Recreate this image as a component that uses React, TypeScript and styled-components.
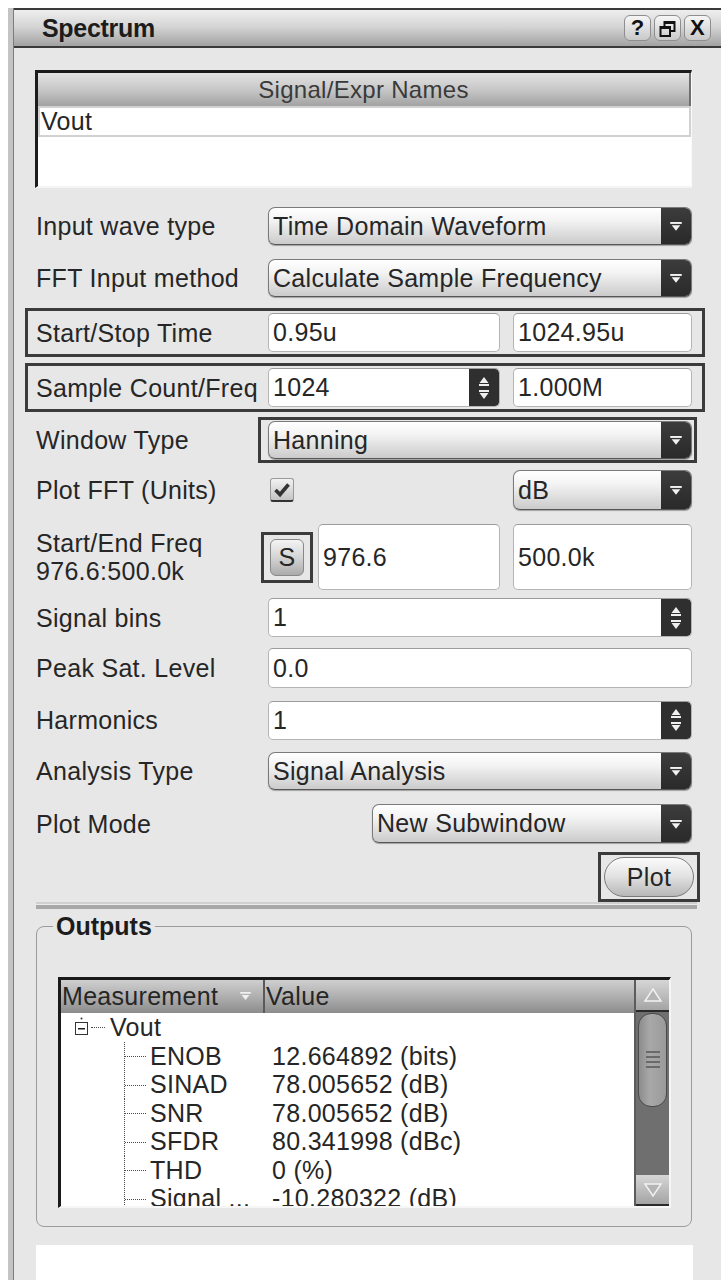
import React from 'react';
import styled, { createGlobalStyle, css } from 'styled-components';

const GlobalStyle = createGlobalStyle`
  html, body { margin: 0; padding: 0; background: #ffffff; }
  body {
    font-family: "Liberation Sans", Arial, sans-serif;
    color: #262626;
    letter-spacing: 0.3px;
  }
  * { box-sizing: border-box; }
`;

const Page = styled.div`
  height: 1280px;
  padding: 8px 0 0 8px;
  overflow: hidden;
`;

const Frame = styled.div`
  height: 1272px;
  border-left: 5px solid #c4c4c4;
`;

const Window = styled.div`
  height: 100%;
  display: flex;
  flex-direction: column;
  border-left: 1px solid #7c7c7c;
  background: #e7e7e7;
`;

const TitleBar = styled.div`
  height: 40px;
  flex: none;
  display: flex;
  align-items: center;
  justify-content: space-between;
  padding: 0 10px 0 28px;
  border-top: 2px solid #3a3a3a;
  border-bottom: 2px solid #3a3a3a;
  background: linear-gradient(#eeeeee, #d6d6d6 45%, #a2a2a2);
`;

const Title = styled.div`
  font-size: 25px;
  font-weight: bold;
  color: #1c1c1c;
  letter-spacing: -0.3px;
`;

const TitleButtons = styled.div`
  display: flex;
  gap: 3px;
`;

const WinButton = styled.div`
  width: 27px;
  height: 26px;
  display: flex;
  align-items: center;
  justify-content: center;
  border: 1px solid #8e8e8e;
  border-radius: 6px;
  background: linear-gradient(#f6f6f6, #c9c9c9);
  font-size: 22px;
  font-weight: bold;
  color: #111;
`;

const Body = styled.div`
  flex: 1;
  display: flex;
  flex-direction: column;
  padding-top: 22px;
  overflow: hidden;
`;

const ListBox = styled.div`
  margin: 0 29px 0 21px;
  height: 118px;
  flex: none;
  background: #ffffff;
  border-top: 3px solid #1c1c1c;
  border-left: 3px solid #1c1c1c;
  border-right: 1px solid #fafafa;
  border-bottom: 2px solid #f4f4f4;
`;

const ListHeader = styled.div`
  height: 33px;
  display: flex;
  align-items: center;
  justify-content: center;
  font-size: 24px;
  color: #3a3a3a;
  border-right: 2px solid #6e6e6e;
  background: linear-gradient(#e4e4e4, #c4c4c4 55%, #a2a2a2);
`;

const ListItem = styled.div`
  height: 31px;
  display: flex;
  align-items: center;
  padding-left: 1px;
  font-size: 25px;
  border: 2px solid #d2d2d2;
`;

const Row = styled.div<{ $top: number; $h: number; $boxed?: boolean }>`
  display: grid;
  grid-template-columns: 232px 1fr;
  align-items: center;
  flex: none;
  height: ${p => p.$h}px;
  ${p =>
    p.$boxed
      ? css`
          margin: ${p.$top}px 16px 0 11px;
          padding: 0 10px 0 8px;
          border: 3px solid #3b3b3b;
        `
      : css`
          margin: ${p.$top}px 29px 0 22px;
        `}
`;

const Label = styled.div`
  font-size: 25px;
  line-height: 28px;
  white-space: nowrap;
`;

const Pair = styled.div`
  display: grid;
  grid-template-columns: 232px 1fr;
  gap: 13px;
  align-items: center;
  height: 100%;
`;

const ComboBox = styled.div<{ $offset?: number; $h?: number }>`
  display: flex;
  height: ${p => p.$h ?? 39}px;
  margin-left: ${p => p.$offset ?? 0}px;
  border: 1px solid #7a7a7a;
  border-bottom-color: #565656;
  border-radius: 7px;
  overflow: hidden;
  background: linear-gradient(#ffffff, #f3f3f3 35%, #cbcbcb);
  box-shadow: 0 1px 1px rgba(0, 0, 0, 0.3);
`;

const ComboText = styled.div`
  flex: 1;
  display: flex;
  align-items: center;
  padding-left: 4px;
  font-size: 25px;
  white-space: nowrap;
`;

const ComboArrow = styled.div`
  width: 30px;
  flex: none;
  display: flex;
  align-items: center;
  justify-content: center;
  padding-top: 2px;
  background: linear-gradient(#3c3c3c, #2a2a2a);
`;

const Field = styled.div<{ $h?: number }>`
  display: flex;
  align-items: stretch;
  height: ${p => p.$h ?? 39}px;
  background: #ffffff;
  border: 1px solid #b4b4b4;
  border-top-color: #9c9c9c;
  border-radius: 5px;
  overflow: hidden;
`;

const FieldText = styled.div`
  flex: 1;
  display: flex;
  align-items: center;
  padding-left: 4px;
  font-size: 25px;
  white-space: nowrap;
`;

const SpinButtons = styled.div`
  width: 30px;
  flex: none;
  display: flex;
  align-items: center;
  justify-content: center;
  background: #2f2f2f;
  border-radius: 0 4px 4px 0;
`;

const HighlightBox = styled.div<{ $ml?: number; $mr?: number }>`
  display: flex;
  align-items: center;
  height: 100%;
  margin-left: ${p => p.$ml ?? 0}px;
  margin-right: ${p => p.$mr ?? 0}px;
  padding: 0 2px 0 7px;
  border: 3px solid #3b3b3b;
  > * { flex: 1; }
`;

const CheckBox = styled.div`
  width: 24px;
  height: 24px;
  margin-left: 2px;
  display: flex;
  align-items: center;
  justify-content: center;
  border: 1px solid #9a9a9a;
  border-bottom: 2px solid #333;
  border-radius: 3px;
  background: linear-gradient(#f2f2f2, #c4c4c4);
`;

const FreqCell = styled.div`
  display: flex;
  align-items: center;
  gap: 5px;
  margin-left: -7px;
  height: 100%;
  > :last-child { flex: 1; }
`;

const SmallBox = styled.div`
  padding: 4px 6px;
  border: 3px solid #3b3b3b;
`;

const SButton = styled.div`
  width: 34px;
  height: 37px;
  display: flex;
  align-items: center;
  justify-content: center;
  border: 1px solid #888;
  border-radius: 6px;
  background: linear-gradient(#f4f4f4, #d4d4d4 50%, #ababab);
  font-size: 25px;
`;

const PlotRow = styled.div`
  display: flex;
  justify-content: flex-end;
  flex: none;
  margin: 9px 21px 0 22px;
  height: 50px;
`;

const PlotBox = styled.div`
  padding: 2px 3px;
  border: 3px solid #3b3b3b;
`;

const PlotButton = styled.div`
  width: 90px;
  height: 40px;
  display: flex;
  align-items: center;
  justify-content: center;
  border: 1px solid #7a7a7a;
  border-radius: 20px;
  background: linear-gradient(#fbfbfb, #e4e4e4 45%, #b8b8b8);
  font-size: 25px;
`;

const Separator = styled.div`
  flex: none;
  height: 7px;
  margin: 0 24px 0 22px;
  background: linear-gradient(#d0d0d0 0 2px, #ececec 2px 3px, #a8a8a8 3px 7px);
`;

const Group = styled.fieldset`
  flex: none;
  margin: 3px 29px 0 22px;
  padding: 37px 20px 18px 21px;
  border: 1px solid #9c9c9c;
  border-radius: 8px;
  min-width: 0;
`;

const GroupTitle = styled.legend`
  margin-left: -5px;
  padding: 0 3px;
  font-size: 25px;
  line-height: 28px;
  font-weight: bold;
  color: #1c1c1c;
  letter-spacing: 0;
`;

const Table = styled.div`
  height: 231px;
  display: grid;
  grid-template-columns: 1fr 33px;
  background: #ffffff;
  border-top: 3px solid #1a1a1a;
  border-left: 3px solid #1a1a1a;
  border-right: 2px solid #f6f6f6;
  border-bottom: 2px solid #f6f6f6;
`;

const TableMain = styled.div`
  overflow: hidden;
  border-right: 2px solid #5c5c5c;
`;

const TableHeader = styled.div`
  height: 33px;
  display: grid;
  grid-template-columns: 204px 1fr;
  background: linear-gradient(#cfcfcf, #acacac 55%, #8c8c8c);
  font-size: 25px;
`;

const HeaderCell = styled.div<{ $sep?: boolean }>`
  display: flex;
  align-items: center;
  justify-content: space-between;
  padding: 0 12px 0 1px;
  white-space: nowrap;
  ${p => p.$sep && css`border-right: 2px solid #5a5a5a;`}
`;

const TreeRow = styled.div`
  display: grid;
  grid-template-columns: 211px 1fr;
  height: 28.5px;
  align-items: center;
  font-size: 25px;
  white-space: nowrap;
`;

const NameCell = styled.div<{ $indent: number }>`
  display: flex;
  align-items: center;
  height: 100%;
  padding-left: ${p => p.$indent}px;
  overflow: hidden;
`;

const Branch = styled.span`
  position: relative;
  flex: none;
  width: 22px;
  height: 100%;
  margin-right: 4px;
  border-left: 1px dotted #4a4a4a;
  &::after {
    content: '';
    position: absolute;
    left: 0;
    right: 0;
    top: 50%;
    border-top: 1px dotted #4a4a4a;
  }
`;

const Stub = styled.span`
  width: 14px;
  margin: 0 5px 0 2px;
  border-top: 1px dotted #4a4a4a;
`;

const ScrollBar = styled.div`
  display: flex;
  flex-direction: column;
  background: #6f6f6f;
`;

const ScrollButton = styled.div<{ $down?: boolean }>`
  height: ${p => (p.$down ? 31 : 32)}px;
  flex: none;
  display: flex;
  align-items: center;
  justify-content: center;
  background: linear-gradient(#d6d6d6, #a4a4a4);
  border-bottom: 2px solid #2a2a2a;
`;

const Track = styled.div`
  flex: 1;
  padding: 1px 2px 0;
`;

const Thumb = styled.div`
  height: 94px;
  display: flex;
  align-items: center;
  justify-content: center;
  border: 1px solid #4a4a4a;
  border-radius: 13px;
  background: linear-gradient(90deg, #8c8c8c, #a8a8a8 40%, #9a9a9a);
`;

const BottomBox = styled.div`
  flex: 1;
  margin: 18px 28px 0 22px;
  background: #ffffff;
`;

function DropArrow({ color = '#f2f2f2', size = 12 }: { color?: string; size?: number }) {
  return (
    <svg width={size} height={size * 0.8} viewBox="0 0 12 10">
      <rect x="0" y="0" width="12" height="2" fill={color} />
      <polygon points="1.5,3.5 10.5,3.5 6,9" fill={color} />
    </svg>
  );
}

function SpinArrows() {
  return (
    <svg width="12" height="26" viewBox="0 0 12 26">
      <polygon points="6,2 10.5,8 1.5,8" fill="#efefef" />
      <rect x="1" y="9" width="10" height="2" fill="#efefef" />
      <rect x="1" y="15" width="10" height="2" fill="#efefef" />
      <polygon points="1.5,18 10.5,18 6,24" fill="#efefef" />
    </svg>
  );
}

function CheckMark() {
  return (
    <svg width="18" height="16" viewBox="0 0 18 16">
      <path d="M2.5 8 L7 12.5 L15.5 2.5" stroke="#333" strokeWidth="3.6" fill="none" />
    </svg>
  );
}

function RestoreIcon() {
  return (
    <svg width="17" height="17" viewBox="0 0 17 17" fill="none" stroke="#111" strokeWidth="2">
      <path d="M5.5 6 V2 H15.5 V11 H11.5" />
      <rect x="5" y="1" width="11" height="3" fill="#111" stroke="none" />
      <rect x="1.5" y="7" width="9.5" height="9" />
      <rect x="1" y="6" width="10.5" height="3" fill="#111" stroke="none" />
    </svg>
  );
}

function Expander() {
  return (
    <svg width="15" height="20" viewBox="0 0 15 20">
      <circle cx="7.5" cy="1.5" r="1" fill="#333" />
      <rect x="1.5" y="5.5" width="12" height="12" fill="#fff" stroke="#333" />
      <rect x="4" y="11" width="7" height="1.5" fill="#222" />
    </svg>
  );
}

function ScrollArrow({ down }: { down?: boolean }) {
  return (
    <svg width="20" height="16" viewBox="0 0 20 16">
      <polygon
        points={down ? '2,2 18,2 10,14' : '10,2 18,14 2,14'}
        fill="#b4b4b4"
        stroke="#f2f2f2"
        strokeWidth="1.5"
      />
    </svg>
  );
}

function Grip() {
  return (
    <svg width="14" height="20" viewBox="0 0 14 20">
      {[1, 6, 11, 16].map(y => (
        <rect key={y} x="0" y={y} width="14" height="2" fill="#6a6a6a" />
      ))}
    </svg>
  );
}

function Combo({ value, offset, h }: { value: string; offset?: number; h?: number }) {
  return (
    <ComboBox $offset={offset} $h={h}>
      <ComboText>{value}</ComboText>
      <ComboArrow>
        <DropArrow />
      </ComboArrow>
    </ComboBox>
  );
}

function TextField({ value, h }: { value: string; h?: number }) {
  return (
    <Field $h={h}>
      <FieldText>{value}</FieldText>
    </Field>
  );
}

function SpinField({ value }: { value: string }) {
  return (
    <Field>
      <FieldText>{value}</FieldText>
      <SpinButtons>
        <SpinArrows />
      </SpinButtons>
    </Field>
  );
}

const measurements = [
  ['ENOB', '12.664892 (bits)'],
  ['SINAD', '78.005652 (dB)'],
  ['SNR', '78.005652 (dB)'],
  ['SFDR', '80.341998 (dBc)'],
  ['THD', '0 (%)'],
  ['Signal ...', '-10.280322 (dB)'],
];

export default function App() {
  return (
    <Page>
      <GlobalStyle />
      <Frame>
        <Window>
          <TitleBar>
            <Title>Spectrum</Title>
            <TitleButtons>
              <WinButton>?</WinButton>
              <WinButton>
                <RestoreIcon />
              </WinButton>
              <WinButton>X</WinButton>
            </TitleButtons>
          </TitleBar>

          <Body>
            <ListBox>
              <ListHeader>Signal/Expr Names</ListHeader>
              <ListItem>Vout</ListItem>
            </ListBox>

            <Row $top={19} $h={38}>
              <Label>Input wave type</Label>
              <Combo value="Time Domain Waveform" h={38} />
            </Row>

            <Row $top={14} $h={38}>
              <Label>FFT Input method</Label>
              <Combo value="Calculate Sample Frequency" h={38} />
            </Row>

            <Row $top={11} $h={49} $boxed>
              <Label>Start/Stop Time</Label>
              <Pair>
                <TextField value="0.95u" />
                <TextField value="1024.95u" />
              </Pair>
            </Row>

            <Row $top={6} $h={49} $boxed>
              <Label>Sample Count/Freq</Label>
              <Pair>
                <SpinField value="1024" />
                <TextField value="1.000M" />
              </Pair>
            </Row>

            <Row $top={5} $h={46}>
              <Label>Window Type</Label>
              <HighlightBox $ml={-10} $mr={-5}>
                <Combo value="Hanning" h={38} />
              </HighlightBox>
            </Row>

            <Row $top={7} $h={40}>
              <Label>Plot FFT (Units)</Label>
              <Pair>
                <CheckBox>
                  <CheckMark />
                </CheckBox>
                <Combo value="dB" h={40} />
              </Pair>
            </Row>

            <Row $top={14} $h={66}>
              <Label>
                Start/End Freq
                <br />
                976.6:500.0k
              </Label>
              <Pair>
                <FreqCell>
                  <SmallBox>
                    <SButton>S</SButton>
                  </SmallBox>
                  <TextField value="976.6" h={66} />
                </FreqCell>
                <TextField value="500.0k" h={66} />
              </Pair>
            </Row>

            <Row $top={8} $h={39}>
              <Label>Signal bins</Label>
              <SpinField value="1" />
            </Row>

            <Row $top={11} $h={40}>
              <Label>Peak Sat. Level</Label>
              <TextField value="0.0" h={40} />
            </Row>

            <Row $top={12} $h={40}>
              <Label>Harmonics</Label>
              <SpinField value="1" />
            </Row>

            <Row $top={12} $h={38}>
              <Label>Analysis Type</Label>
              <Combo value="Signal Analysis" h={38} />
            </Row>

            <Row $top={14} $h={39}>
              <Label>Plot Mode</Label>
              <Combo value="New Subwindow" offset={104} />
            </Row>

            <PlotRow>
              <PlotBox>
                <PlotButton>Plot</PlotButton>
              </PlotBox>
            </PlotRow>

            <Separator />

            <Group>
              <GroupTitle>Outputs</GroupTitle>
              <Table>
                <TableMain>
                  <TableHeader>
                    <HeaderCell $sep>
                      Measurement
                      <DropArrow color="#f0f0f0" size={11} />
                    </HeaderCell>
                    <HeaderCell>Value</HeaderCell>
                  </TableHeader>
                  <TreeRow>
                    <NameCell $indent={13}>
                      <Expander />
                      <Stub />
                      Vout
                    </NameCell>
                    <div />
                  </TreeRow>
                  {measurements.map(([name, value]) => (
                    <TreeRow key={name}>
                      <NameCell $indent={63}>
                        <Branch />
                        {name}
                      </NameCell>
                      <div>{value}</div>
                    </TreeRow>
                  ))}
                </TableMain>
                <ScrollBar>
                  <ScrollButton>
                    <ScrollArrow />
                  </ScrollButton>
                  <Track>
                    <Thumb>
                      <Grip />
                    </Thumb>
                  </Track>
                  <ScrollButton $down>
                    <ScrollArrow down />
                  </ScrollButton>
                </ScrollBar>
              </Table>
            </Group>

            <BottomBox />
          </Body>
        </Window>
      </Frame>
    </Page>
  );
}
